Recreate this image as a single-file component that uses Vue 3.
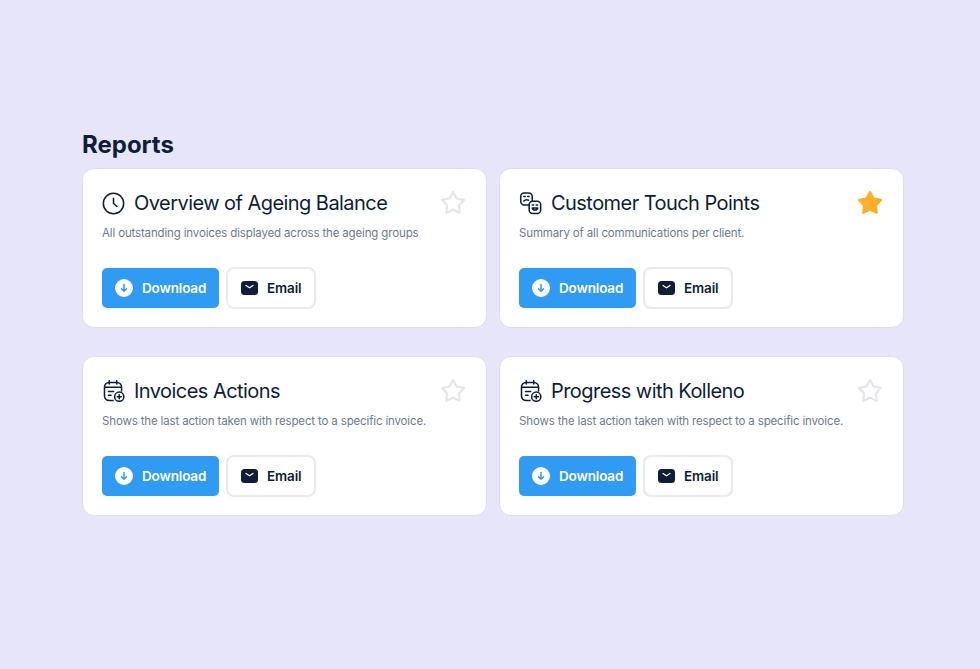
<template>
  <div class="page">
    <div class="reports">
      <h1 class="heading">Reports</h1>
      <div class="grid">
        <div v-for="report in reports" :key="report.title" class="card">
          <div class="card-head">
            <!-- Clock -->
            <svg v-if="report.icon === 'clock'" class="title-icon" viewBox="0 0 24 24" fill="none" stroke="#0f1e36" stroke-width="1.6" stroke-linecap="round" stroke-linejoin="round">
              <circle cx="12" cy="12" r="10.6" />
              <path d="M12 6.500V12l3.600 3" />
            </svg>
            <!-- Two faces -->
            <svg v-else-if="report.icon === 'faces'" class="title-icon" viewBox="0 0 24 24" fill="none" stroke="#0f1e36" stroke-width="1.6" stroke-linecap="round" stroke-linejoin="round">
              <rect x="1.800" y="1" width="12" height="12.600" rx="3.600" />
              <rect x="10.600" y="9.600" width="12" height="12.800" rx="3.600" fill="#fff" />
              <path d="M5 4.800h1.500M9 4.800h1.500M5 9.400c1.500-1.500 3.400-1.600 5-.8" />
              <path d="M13.800 13.600h1.500M17.900 13.600h1.500M13.800 16.600h5.800c-.4 3-5.400 3-5.800 0z" />
            </svg>
            <!-- Calendar with plus -->
            <svg v-else class="title-icon" viewBox="0 0 24 24" fill="none" stroke="#0f1e36" stroke-width="1.6" stroke-linecap="round" stroke-linejoin="round">
              <path d="M11.500 21.500H7.400A4.800 4.800 0 0 1 2.600 16.700V7.300A4.800 4.800 0 0 1 7.400 2.500h8.200a4.800 4.800 0 0 1 4.800 4.800v4.200" />
              <path d="M7.600 .8v3.400M15.400 .8v3.400M2.800 7.600h17.400M6.800 12h5.400M6.800 16h2.600" />
              <circle cx="18" cy="17.400" r="4.800" fill="#fff" />
              <path d="M18 15.300v4.200M15.900 17.400h4.200" />
            </svg>
            <h2 class="card-title">{{ report.title }}</h2>
            <svg class="star" viewBox="0 0 28 28" :fill="report.starred ? '#FFAE2B' : 'none'" :stroke="report.starred ? '#FFAE2B' : '#e4e6ea'" stroke-width="2.200" stroke-linejoin="round">
              <path d="M14 3l3.640 6.480 7.300 1.470-5.040 5.470.86 7.380L14 20.700l-6.760 3.100.86-7.380-5.040-5.470 7.300-1.470z" />
            </svg>
          </div>
          <p class="card-desc">{{ report.desc }}</p>
          <div class="actions">
            <button class="btn btn-download">
              <svg class="btn-icon" viewBox="0 0 18 18">
                <circle cx="9" cy="9" r="9" fill="#fff" />
                <path d="M9 5.500v6.500M6.500 9.700 9 12.200l2.500-2.500" fill="none" stroke="#2F9BF3" stroke-width="1.500" stroke-linecap="round" stroke-linejoin="round" />
              </svg>
              Download
            </button>
            <button class="btn btn-email">
              <svg class="btn-icon" viewBox="0 0 18 18">
                <rect y="2" width="17" height="14" rx="3.500" fill="#0f1e36" />
                <path d="M5 6.500 8.500 8.800 12 6.500" fill="none" stroke="#fff" stroke-width="1.300" stroke-linecap="round" stroke-linejoin="round" />
              </svg>
              Email
            </button>
          </div>
        </div>
      </div>
    </div>
  </div>
</template>

<script setup>
const reports = [
  { title: 'Overview of Ageing Balance', desc: 'All outstanding invoices displayed across the ageing groups', icon: 'clock', starred: false },
  { title: 'Customer Touch Points', desc: 'Summary of all communications per client.', icon: 'faces', starred: true },
  { title: 'Invoices Actions', desc: 'Shows the last action taken with respect to a specific invoice.', icon: 'calendar', starred: false },
  { title: 'Progress with Kolleno', desc: 'Shows the last action taken with respect to a specific invoice.', icon: 'calendar', starred: false }
];
</script>

<style>
html, body {
  margin: 0;
  background: #E6E5FA;
}
</style>

<style scoped>
.page {
  height: 669px;
  box-sizing: border-box;
  padding: 129px 0 0 82px;
  background: #E6E5FA;
  font-family: Inter, "Liberation Sans", sans-serif;
  color: #0f1e36;
}

.reports {
  width: 822px;
}

.heading {
  margin: 0 0 7px;
  font-size: 24px;
  line-height: 32px;
  font-weight: 700;
  letter-spacing: 0;
}

.grid {
  display: grid;
  grid-template-columns: 405px 405px;
  column-gap: 12px;
  row-gap: 28px;
}

.card {
  box-sizing: border-box;
  height: 160px;
  padding: 19px 19px 0;
  background: #fff;
  border: 1px solid #dcdfee;
  border-radius: 12px;
}

.card-head {
  display: flex;
  align-items: center;
  height: 30px;
}

.title-icon {
  width: 23px;
  height: 23px;
  margin-right: 9px;
  flex: none;
}

.card-title {
  margin: 0;
  flex: 1;
  font-size: 20px;
  line-height: 30px;
  font-weight: 400;
  letter-spacing: -0.55px;
}

.star {
  width: 28px;
  height: 28px;
  flex: none;
}

.card-desc {
  margin: 6px 0 0;
  font-size: 11.5px;
  line-height: 18px;
  letter-spacing: -0.15px;
  color: #6f7b8d;
}

.actions {
  display: flex;
  align-items: center;
  gap: 7px;
  margin-top: 25px;
}

.btn {
  display: flex;
  align-items: center;
  box-sizing: border-box;
  height: 40px;
  padding: 0;
  font-family: inherit;
  font-size: 13.500px;
  font-weight: 600;
  letter-spacing: -0.15px;
  border-radius: 5px;
}

.btn-download {
  width: 117px;
  padding-left: 13px;
  gap: 9px;
  background: #2F9BF3;
  border: none;
  color: #fff;
}

.btn-email {
  width: 90px;
  height: 42px;
  padding-left: 13px;
  gap: 8px;
  background: #fff;
  border: 2px solid #e8eaf0;
  border-radius: 8px;
  color: #0f1e36;
}

.btn-icon {
  width: 18px;
  height: 18px;
  flex: none;
}
</style>
